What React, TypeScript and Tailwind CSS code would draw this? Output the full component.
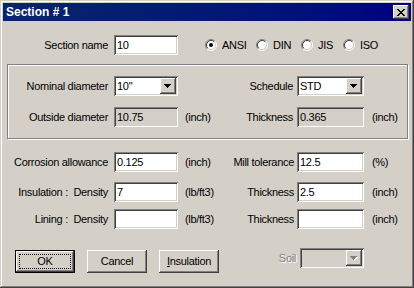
import React from 'react';

const raised = 'shadow-[inset_-1px_-1px_#404040,inset_1px_1px_#fff,inset_-2px_-2px_#808080,inset_2px_2px_#d4d0c8]';
const sunken = 'shadow-[inset_1px_1px_#808080,inset_-1px_-1px_#fff,inset_2px_2px_#404040,inset_-2px_-2px_#d4d0c8]';

const Label = ({ w, children }: { w: string; children: React.ReactNode }) => (
  <div className={`${w} text-right whitespace-pre`}>{children}</div>
);

const Edit = ({ value = '', w = 'w-[64px]', readOnly = false }: { value?: string; w?: string; readOnly?: boolean }) => (
  <div className={`${w} h-[20px] ${sunken} ${readOnly ? 'bg-[#d4d0c8]' : 'bg-white'} flex items-center pl-[3px]`}>
    {value}
  </div>
);

const Arrow = ({ disabled = false }: { disabled?: boolean }) => (
  <svg width="8" height="5" viewBox="0 0 8 5" shapeRendering="crispEdges">
    {disabled && (
      <g fill="#fff">
        <rect x="1" y="1" width="7" height="1" />
        <rect x="2" y="2" width="5" height="1" />
        <rect x="3" y="3" width="3" height="1" />
        <rect x="4" y="4" width="1" height="1" />
      </g>
    )}
    <g fill={disabled ? '#808080' : '#000'}>
      <rect x="0" y="0" width="7" height="1" />
      <rect x="1" y="1" width="5" height="1" />
      <rect x="2" y="2" width="3" height="1" />
      <rect x="3" y="3" width="1" height="1" />
    </g>
  </svg>
);

const Combo = ({ value = '', w = 'w-[64px]', disabled = false }: { value?: string; w?: string; disabled?: boolean }) => (
  <div className={`${w} h-[20px] ${sunken} ${disabled ? 'bg-[#d4d0c8]' : 'bg-white'} flex p-[2px]`}>
    <div className="flex-1 flex items-center pl-[1px]">{value}</div>
    <div className={`w-[16px] h-[16px] bg-[#d4d0c8] flex items-center justify-center ${raised}`}>
      <Arrow disabled={disabled} />
    </div>
  </div>
);

const Radio = ({ checked = false }: { checked?: boolean }) => (
  <svg width="12" height="12" viewBox="0 0 12 12">
    <circle cx="6" cy="6" r="4.5" fill="#fff" />
    <path d="M2.11 9.89 A5.5 5.5 0 0 1 9.89 2.11" fill="none" stroke="#808080" strokeWidth="1" />
    <path d="M9.89 2.11 A5.5 5.5 0 0 1 2.11 9.89" fill="none" stroke="#fff" strokeWidth="1" />
    <path d="M2.82 9.18 A4.5 4.5 0 0 1 9.18 2.82" fill="none" stroke="#404040" strokeWidth="1" />
    <path d="M9.18 2.82 A4.5 4.5 0 0 1 2.82 9.18" fill="none" stroke="#d4d0c8" strokeWidth="1" />
    {checked && <circle cx="6" cy="6" r="2" fill="#000" />}
  </svg>
);

const RadioItem = ({ w, label, checked }: { w: string; label: string; checked?: boolean }) => (
  <div className={`${w} flex items-center gap-[5px]`}>
    <Radio checked={checked} />
    <span>{label}</span>
  </div>
);

const Button = ({ children, isDefault = false }: { children: React.ReactNode; isDefault?: boolean }) => (
  <div className={`w-[60px] h-[23px] bg-[#d4d0c8] ${isDefault ? 'border border-black' : ''} ${raised} flex items-center justify-center p-[3px]`}>
    {isDefault ? (
      <div className="w-full h-full border border-dotted border-black flex items-center justify-center">{children}</div>
    ) : (
      children
    )}
  </div>
);

const CloseGlyph = () => (
  <svg width="8" height="7" viewBox="0 0 8 7" shapeRendering="crispEdges" fill="#000">
    <rect x="0" y="0" width="2" height="1" />
    <rect x="6" y="0" width="2" height="1" />
    <rect x="1" y="1" width="2" height="1" />
    <rect x="5" y="1" width="2" height="1" />
    <rect x="2" y="2" width="4" height="1" />
    <rect x="3" y="3" width="2" height="1" />
    <rect x="2" y="4" width="4" height="1" />
    <rect x="1" y="5" width="2" height="1" />
    <rect x="5" y="5" width="2" height="1" />
    <rect x="0" y="6" width="2" height="1" />
    <rect x="6" y="6" width="2" height="1" />
  </svg>
);

export default function App() {
  return (
    <div className="w-[414px] h-[288px] bg-[#d4d0c8] p-[3px] shadow-[inset_-1px_-1px_#404040,inset_1px_1px_#d4d0c8,inset_-2px_-2px_#808080,inset_2px_2px_#fff] font-['Liberation_Sans',Arial,sans-serif] text-[11px] tracking-[-0.3px] text-black leading-none overflow-hidden">
      {/* title bar */}
      <div className="h-[18px] bg-linear-to-r from-[#0a246a] to-[#000080] flex items-center justify-between pl-[3px] pr-[2px]">
        <span className="text-white font-bold text-[12px] tracking-normal">Section # 1</span>
        <div className={`w-[16px] h-[14px] bg-[#d4d0c8] ${raised} flex items-center justify-center`}>
          <CloseGlyph />
        </div>
      </div>

      {/* section name + standard */}
      <div className="mt-[14px] flex items-center h-[20px]">
        <Label w="w-[105px]">Section name</Label>
        <div className="ml-[6px]">
          <Edit value="10" />
        </div>
        <div className="ml-[27px] flex items-center">
          <RadioItem w="w-[51px]" label="ANSI" checked />
          <RadioItem w="w-[45px]" label="DIN" />
          <RadioItem w="w-[42px]" label="JIS" />
          <RadioItem w="w-[40px]" label="ISO" />
        </div>
      </div>

      {/* pipe group */}
      <div className="mt-[9px] ml-[4px] w-[401px] border border-[#808080] shadow-[inset_1px_1px_#fff,1px_1px_#fff] pt-[11px] pb-[11px] flex flex-col gap-[11px]">
        <div className="flex items-center h-[20px]">
          <Label w="w-[100px]">Nominal diameter</Label>
          <div className="ml-[6px]">
            <Combo value={'10"'} />
          </div>
          <div className="ml-[7px] w-[40px]" />
          <Label w="w-[68px]">Schedule</Label>
          <div className="ml-[4px]">
            <Combo value="STD" w="w-[67px]" />
          </div>
        </div>
        <div className="flex items-center h-[20px]">
          <Label w="w-[100px]">Outside diameter</Label>
          <div className="ml-[6px]">
            <Edit value="10.75" readOnly />
          </div>
          <div className="ml-[7px] w-[40px]">(inch)</div>
          <Label w="w-[68px]">Thickness</Label>
          <div className="ml-[4px]">
            <Edit value="0.365" w="w-[67px]" readOnly />
          </div>
          <div className="ml-[8px]">(inch)</div>
        </div>
      </div>

      {/* allowances */}
      <div className="mt-[13px] flex flex-col">
        {[
          { l: 'Corrosion allowance', v: '0.125', u: '(inch)', l2: 'Mill tolerance', v2: '12.5', u2: '(%)', mt: 'mt-0' },
          { l: 'Insulation :  Density', v: '7', u: '(lb/ft3)', l2: 'Thickness', v2: '2.5', u2: '(inch)', mt: 'mt-[10px]' },
          { l: 'Lining :  Density', v: '', u: '(lb/ft3)', l2: 'Thickness', v2: '', u2: '(inch)', mt: 'mt-[7px]' },
        ].map((r) => (
          <div key={r.l} className={`${r.mt} flex items-center h-[20px]`}>
            <Label w="w-[105px]">{r.l}</Label>
            <div className="ml-[6px]">
              <Edit value={r.v} />
            </div>
            <div className="ml-[7px] w-[40px]">{r.u}</div>
            <Label w="w-[69px]">{r.l2}</Label>
            <div className="ml-[3px]">
              <Edit value={r.v2} w="w-[67px]" />
            </div>
            <div className="ml-[8px]">{r.u2}</div>
          </div>
        ))}
      </div>

      {/* buttons */}
      <div className="mt-[19px] flex items-start">
        <div className="ml-[12px] mt-[2px] flex gap-[12px]">
          <Button isDefault>OK</Button>
          <Button>Cancel</Button>
          <Button>
            <span>
              <span className="underline">I</span>nsulation
            </span>
          </Button>
        </div>
        <div className="ml-[57px] flex items-center h-[20px]">
          <div className="w-[20px] text-right text-[#808080] [text-shadow:1px_1px_0_#fff]">Soil</div>
          <div className="ml-[4px]">
            <Combo disabled />
          </div>
        </div>
      </div>
    </div>
  );
}
